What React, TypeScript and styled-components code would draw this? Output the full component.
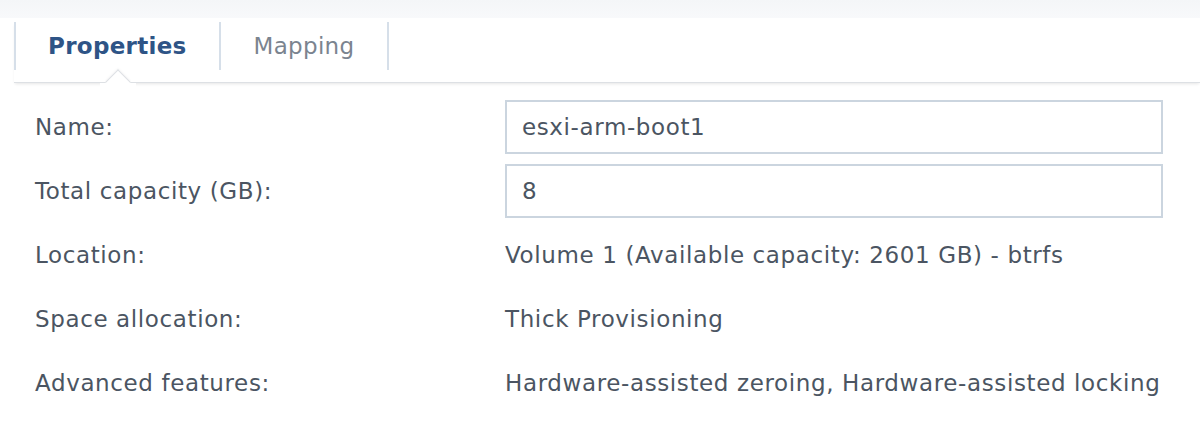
import React from "react";
import styled, { createGlobalStyle } from "styled-components";

const Global = createGlobalStyle`
  html, body { margin: 0; padding: 0; background: #ffffff; }
  body { font-family: "DejaVu Sans", Verdana, sans-serif; }
  * { box-sizing: border-box; }
`;

const Page = styled.div`
  width: 1200px;
  height: 442px;
  background: #ffffff;
  display: flex;
  flex-direction: column;
  overflow: hidden;
`;

const TopBand = styled.div`
  height: 18px;
  background: linear-gradient(#f4f6f8, #f8f9fb);
  flex: none;
`;

const TabBar = styled.div`
  margin: 4px 0 0 14px;
  height: 61px;
  position: relative;
  border-bottom: 1px solid #dde0e4;
  box-shadow: 0 2px 3px -1px rgba(0, 0, 0, 0.1);
`;

const Tabs = styled.div`
  display: flex;
  align-items: flex-start;
`;

const Tab = styled.div<{ $active?: boolean; $last?: boolean }>`
  height: 48px;
  display: flex;
  align-items: center;
  justify-content: center;
  padding: 0 ${(p) => (p.$last ? "33px" : "32px")};
  border-left: 2px solid #d6dfe9;
  border-right: ${(p) => (p.$last ? "2px solid #d6dfe9" : "none")};
  font-size: 23px;
  letter-spacing: 0.3px;
  font-weight: ${(p) => (p.$active ? 700 : 400)};
  color: ${(p) => (p.$active ? "#2e5486" : "#7b848f")};
`;

const Notch = styled.div`
  position: absolute;
  left: 95px;
  bottom: -9px;
  width: 18px;
  height: 18px;
  background: #ffffff;
  border-top: 1px solid #dde0e4;
  border-left: 1px solid #dde0e4;
  transform: rotate(45deg);
  box-shadow: -1px -1px 2px rgba(0, 0, 0, 0.04);
`;

const NotchCover = styled.div`
  position: absolute;
  left: 86px;
  bottom: -14px;
  width: 36px;
  height: 13px;
  background: #ffffff;
`;

const Form = styled.div`
  padding: 12px 0 0 35px;
  display: grid;
  grid-template-columns: 470px 658px;
  grid-auto-rows: 64px;
  align-items: center;
  font-size: 23px;
  letter-spacing: 0.62px;
  color: #4b5562;
`;

const Label = styled.div`
  white-space: nowrap;
`;

const Value = styled.div`
  white-space: nowrap;
`;

const Input = styled.div`
  height: 54px;
  border: 2px solid #cbd5df;
  background: #ffffff;
  display: flex;
  align-items: center;
  padding-left: 15px;
  color: #4b5562;
`;

export default function App() {
  return (
    <>
      <Global />
      <Page>
        <TopBand />
        <TabBar>
          <Tabs>
            <Tab $active>Properties</Tab>
            <Tab $last>Mapping</Tab>
          </Tabs>
          <Notch />
          <NotchCover />
        </TabBar>
        <Form>
          <Label>Name:</Label>
          <Input>esxi-arm-boot1</Input>
          <Label>Total capacity (GB):</Label>
          <Input>8</Input>
          <Label>Location:</Label>
          <Value>Volume 1 (Available capacity: 2601 GB) - btrfs</Value>
          <Label>Space allocation:</Label>
          <Value>Thick Provisioning</Value>
          <Label>Advanced features:</Label>
          <Value>Hardware-assisted zeroing, Hardware-assisted locking</Value>
        </Form>
      </Page>
    </>
  );
}
